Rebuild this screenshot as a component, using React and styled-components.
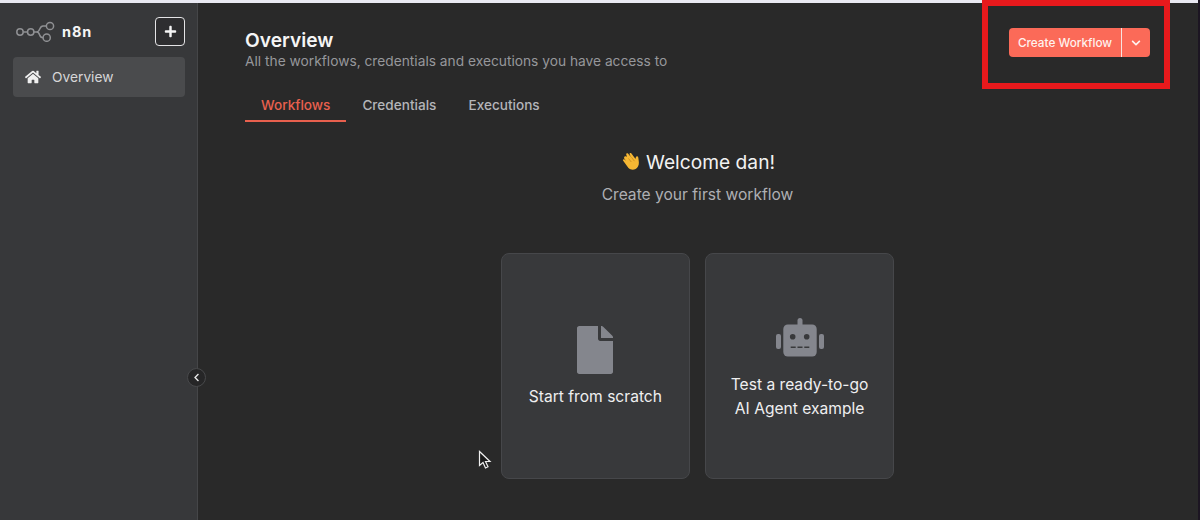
import React from "react";
import styled, { createGlobalStyle } from "styled-components";
import { FaHome, FaPlus, FaFile, FaChevronDown, FaChevronLeft } from "react-icons/fa";

const Global = createGlobalStyle`
  html, body { margin: 0; padding: 0; height: 520px; overflow: hidden; background: #292929; }
  * { box-sizing: border-box; }
  body { font-family: Inter, "Liberation Sans", sans-serif; }
`;

const Page = styled.div`
  position: relative;
  width: 1200px;
  height: 520px;
  display: flex;
  flex-direction: column;
  overflow: hidden;
`;
const TopStrip = styled.div`
  height: 3px;
  flex: none;
  background: #e9e9f2;
`;
const Body = styled.div`
  flex: 1;
  display: flex;
  min-height: 0;
`;
const Sidebar = styled.aside`
  position: relative;
  width: 198px;
  flex: none;
  background: #37383a;
  border-right: 1px solid #454648;
  padding: 14px 12px 0 13px;
`;
const BrandRow = styled.div`
  display: flex;
  align-items: center;
  justify-content: space-between;
  height: 28px;
`;
const Brand = styled.div`
  display: flex;
  align-items: center;
  gap: 7px;
  padding-left: 2px;
  color: #f5f5f5;
  font-size: 14.5px;
  font-weight: 700;
  letter-spacing: 0.9px;
`;
const AddButton = styled.button`
  width: 30px;
  height: 29px;
  padding: 0;
  display: flex;
  align-items: center;
  justify-content: center;
  color: #f5f5f5;
  background: #2e2e30;
  border: 1px solid #e4e4e6;
  border-radius: 4px;
  font-size: 13px;
`;
const NavItem = styled.div`
  display: flex;
  align-items: center;
  gap: 11px;
  height: 40px;
  margin-top: 12px;
  padding-left: 12px;
  border-radius: 4px;
  background: #4a4b4d;
  color: #d6d6d8;
  font-size: 13.75px;
`;
const NavIcon = styled.span`
  display: flex;
  font-size: 16px;
  color: #f0f0f0;
  margin-top: -1px;
`;
const Collapse = styled.button`
  position: absolute;
  right: -9px;
  top: 365px;
  width: 19px;
  height: 19px;
  padding: 0;
  display: flex;
  align-items: center;
  justify-content: center;
  border-radius: 50%;
  background: #262627;
  border: 1px solid #48494b;
  color: #e6e6e6;
  font-size: 9px;
`;
const Main = styled.main`
  width: 1000px;
  flex: none;
  background: #292929;
  padding: 26px 48px 0 47px;
  display: flex;
  flex-direction: column;
`;
const Header = styled.header`
  display: flex;
  justify-content: space-between;
  align-items: flex-start;
  height: 65px;
`;
const Titles = styled.div`
  display: flex;
  flex-direction: column;
`;
const Title = styled.h1`
  margin: 0;
  font-size: 19.2px;
  font-weight: 600;
  line-height: 22px;
  color: #f5f5f5;
`;
const Subtitle = styled.p`
  margin: 0;
  font-size: 13.75px;
  line-height: 20px;
  color: #96979b;
`;
const SplitButton = styled.div`
  display: flex;
  height: 29px;
  width: 141px;
  margin-top: -1px;
  border-radius: 4px;
  overflow: hidden;
  background: #fb6a58;
  color: #fff2ef;
  font-size: 11.75px;
  font-weight: 500;
`;
const ButtonMain = styled.div`
  flex: 1;
  display: flex;
  align-items: center;
  justify-content: center;
  border-right: 1px solid #f7e4e0;
`;
const ButtonCaret = styled.div`
  width: 28px;
  display: flex;
  align-items: center;
  justify-content: center;
  font-size: 10px;
`;
const Tabs = styled.nav`
  display: flex;
  align-self: flex-start;
`;
const Tab = styled.div`
  padding: 0 16px;
  height: 28px;
  line-height: 23px;
  font-size: 13.6px;
  font-weight: 500;
  color: ${(p) => (p.$active ? "#e8604e" : "#b4b5b9")};
  border-bottom: 2px solid ${(p) => (p.$active ? "#e8604e" : "transparent")};
`;
const Welcome = styled.h2`
  margin: 27px 0 0 2px;
  display: flex;
  justify-content: center;
  align-items: center;
  gap: 4px;
  font-size: 19.2px;
  font-weight: 400;
  line-height: 26px;
  color: #f2f2f2;
`;
const Lead = styled.p`
  margin: 8px 0 0;
  text-align: center;
  font-size: 15.6px;
  line-height: 24px;
  color: #aeafb3;
`;
const Cards = styled.div`
  display: flex;
  justify-content: center;
  gap: 15.5px;
  margin-top: 46px;
`;
const Card = styled.div`
  width: 188.7px;
  height: 226px;
  padding-top: ${(p) => p.$offset || 0}px;
  display: flex;
  flex-direction: column;
  align-items: center;
  justify-content: center;
  border-radius: 8px;
  background: #38393b;
  border: 1px solid #46474a;
  color: #efeff0;
  font-size: 15.6px;
  line-height: 24px;
  text-align: center;
`;
const CardIcon = styled.div`
  display: flex;
  color: #84868d;
  font-size: ${(p) => p.$size}px;
  margin-bottom: ${(p) => p.$gap}px;
`;
const Annotation = styled.div`
  position: absolute;
  left: 982px;
  top: 0;
  width: 188px;
  height: 89px;
  border: 6px solid #e8191c;
`;
const EdgeLine = styled.div`
  position: absolute;
  right: 0;
  top: 0;
  bottom: 0;
  width: 2px;
  background: #1c1522;
`;
const Pointer = styled.svg`
  position: absolute;
  left: 478px;
  top: 450px;
`;

const Logo = () => (
  <svg width="40" height="22" viewBox="0 0 40 22" fill="none" stroke="#8f9093" strokeWidth="1.5">
    <circle cx="5" cy="12" r="3.2" />
    <circle cx="15.700" cy="12" r="3.2" />
    <circle cx="35" cy="6" r="3.6" />
    <circle cx="31.700" cy="17.700" r="3.6" />
    <path d="M8.200 12h4.300M18.900 12h2.600c4 0 2.500-6 6.500-6h3.400M21.500 12c4.500 0 1.500 5.700 6.600 5.700" />
  </svg>
);

const Wave = () => (
  <svg width="20" height="20" viewBox="1.500 1.500 16 17">
    <path
      fill="#f6b733"
      d="M3.200 5.400c.6-.6 1.400-.4 2 .2L4.600 3.700c-.3-.8.700-1.600 1.500-.9l2.400 3-1-2.300c-.3-.9.800-1.500 1.500-.8l3.500 4.700c.1-1 .3-2.200 1.300-2.300.9 0 1 .8 1.100 1.500.3 2.700 1 4.800-.3 7.300-1.900 3.200-5.700 3.500-8.100 1.300L2 9c-.7-.8.300-1.800 1.100-1.200l1.300 1.200-1.500-2c-.3-.5-.1-1.200.3-1.600z"
    />
    <path fill="none" stroke="#c98a1c" strokeWidth=".7" d="M6.500 7l2.400 3M9 6l2.600 3.300" />
  </svg>
);

const Robot = () => (
  <svg width="48" height="39" viewBox="0 0 48 39">
    <rect x="7.300" y="6.500" width="33.400" height="32" rx="4.500" fill="#84868d" />
    <rect x="0" y="16" width="5" height="15" rx="2" fill="#84868d" />
    <rect x="43" y="16" width="5" height="15" rx="2" fill="#84868d" />
    <rect x="21.500" y="0" width="5" height="9" rx="2.500" fill="#84868d" />
    <circle cx="16.700" cy="18.700" r="2.800" fill="#38393b" />
    <circle cx="30.700" cy="18.700" r="2.800" fill="#38393b" />
    <path d="M14.700 29.300h5M21.500 29.300h5M28.300 29.300h5" stroke="#38393b" strokeWidth="1.500" />
  </svg>
);

export default function App() {
  return (
    <Page>
      <Global />
      <TopStrip />
      <Body>
        <Sidebar>
          <BrandRow>
            <Brand>
              <Logo />
              n8n
            </Brand>
            <AddButton aria-label="Add">
              <FaPlus />
            </AddButton>
          </BrandRow>
          <NavItem>
            <NavIcon>
              <FaHome />
            </NavIcon>
            Overview
          </NavItem>
          <Collapse aria-label="Collapse">
            <FaChevronLeft />
          </Collapse>
        </Sidebar>
        <Main>
          <Header>
            <Titles>
              <Title>Overview</Title>
              <Subtitle>All the workflows, credentials and executions you have access to</Subtitle>
            </Titles>
            <SplitButton>
              <ButtonMain>Create Workflow</ButtonMain>
              <ButtonCaret>
                <FaChevronDown />
              </ButtonCaret>
            </SplitButton>
          </Header>
          <Tabs>
            <Tab $active>Workflows</Tab>
            <Tab>Credentials</Tab>
            <Tab>Executions</Tab>
          </Tabs>
          <Welcome>
            <Wave />
            Welcome dan!
          </Welcome>
          <Lead>Create your first workflow</Lead>
          <Cards>
            <Card $offset={3}>
              <CardIcon $size={48} $gap={11}>
                <FaFile />
              </CardIcon>
              Start from scratch
            </Card>
            <Card $offset={6}>
              <CardIcon $size={48} $gap={16}>
                <Robot />
              </CardIcon>
              Test a ready-to-go
              <br />
              AI Agent example
            </Card>
          </Cards>
        </Main>
      </Body>
      <EdgeLine />
      <Annotation />
      <Pointer width="14" height="20" viewBox="0 0 14 20">
        <path d="M1.500 1.500v14l3.500-3 2.500 5.500 2.500-1.200-2.500-5.300h4.500z" fill="#1a1a1a" stroke="#f0f0f0" strokeWidth="1.200" />
      </Pointer>
    </Page>
  );
}
